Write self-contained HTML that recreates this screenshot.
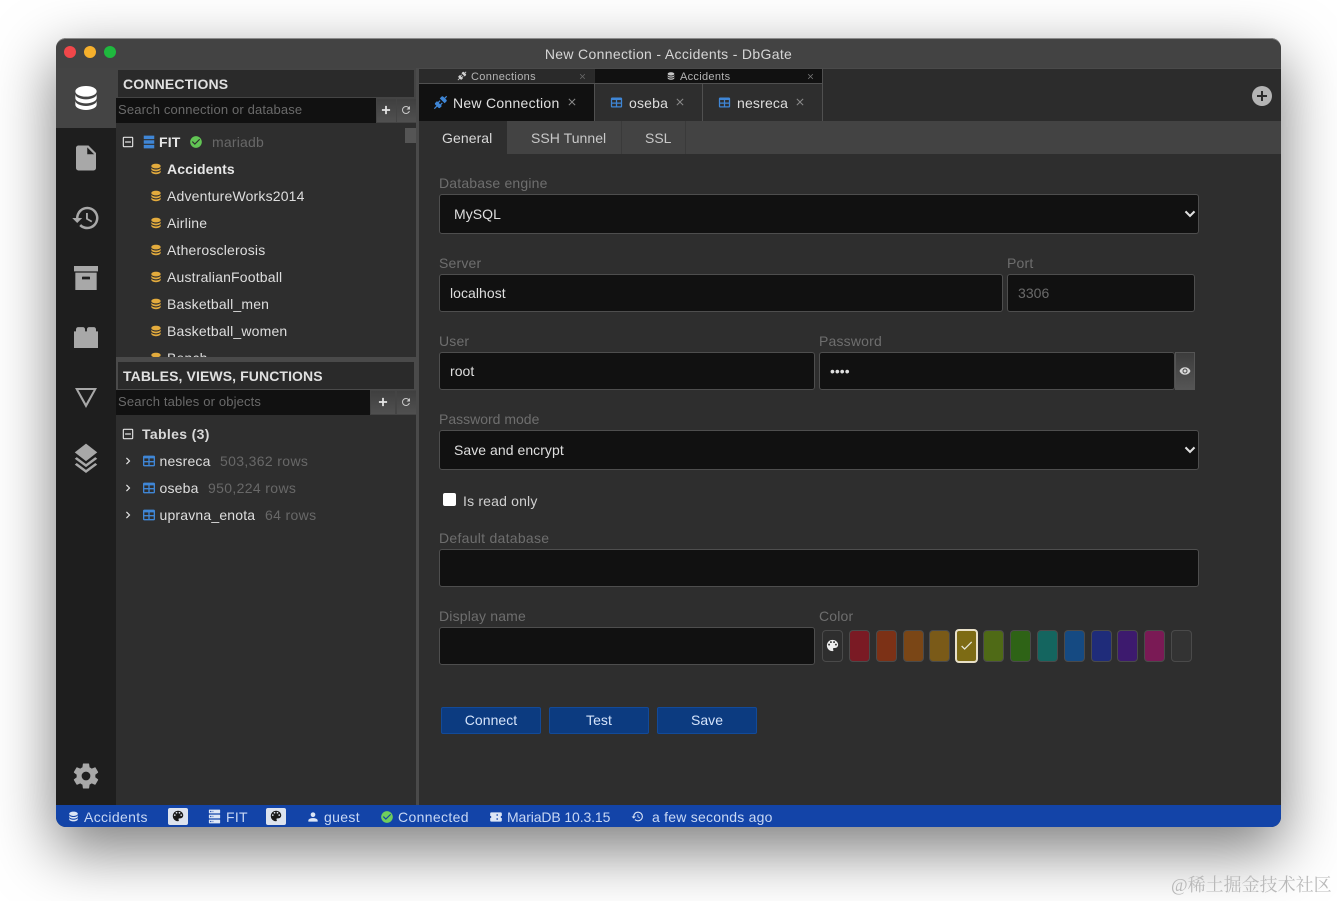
<!DOCTYPE html>
<html><head><meta charset="utf-8"><title>New Connection - Accidents - DbGate</title>
<style>
html,body{margin:0;padding:0;width:1337px;height:901px;overflow:hidden;background:#fff}
body{font-family:"Liberation Sans","Noto Sans CJK SC",sans-serif;font-size:14px;color:#dedede;position:relative}
.a,.t,svg,.b{position:absolute}
.t{line-height:20px;height:20px;white-space:nowrap;letter-spacing:.18px}
.l{color:#6e6e6e}
.d{color:#686868;letter-spacing:.35px}
.bd{font-weight:bold}
.f{letter-spacing:.05px}
.b{box-sizing:border-box;background:#111;border:1px solid #4e4e4e;border-radius:3px}
svg{fill:currentColor}
.y{color:#e3ab3d}.bl{color:#3f86d6}.g{color:#a8a8a8}.w{color:#e2e2e2}
.s{box-sizing:border-box;position:absolute;top:630px;width:21px;height:32px;border-radius:4px;border:1px solid #4a4a4a}
.st{color:#c9d8f4;font-size:14px;letter-spacing:.3px}
.se{color:#6a6a6a;font-size:13px;letter-spacing:.15px}
#win{position:absolute;left:56px;top:38px;width:1225px;height:789px;border-radius:10px;box-shadow:0 22px 60px 2px rgba(0,0,0,.5);background:#2e2e2e}
.btn{box-sizing:border-box;position:absolute;top:707px;width:100px;height:27px;background:#0c3b80;border:1px solid #124a99;border-radius:2px;color:#d4e3fa;text-align:center;line-height:25px;font-size:14px;letter-spacing:.05px}
.tb{position:absolute;background:linear-gradient(#3f3f3f,#505050)}
</style></head><body>
<svg width="0" height="0" style="left:0;top:0">
<defs>
<symbol id="db" viewBox="0 0 24 24"><path d="M12,3C7.58,3 4,4.79 4,7C4,9.21 7.58,11 12,11C16.42,11 20,9.21 20,7C20,4.79 16.42,3 12,3M4,9V12C4,14.21 7.58,16 12,16C16.42,16 20,14.21 20,12V9C20,11.21 16.42,13 12,13C7.58,13 4,11.21 4,9M4,14V17C4,19.21 7.58,21 12,21C16.42,21 20,19.21 20,17V14C20,16.21 16.42,18 12,18C7.58,18 4,16.21 4,14Z"/></symbol>
<symbol id="tbl" viewBox="0 0 24 24"><path d="M5,4H19A2,2 0 0,1 21,6V18A2,2 0 0,1 19,20H5A2,2 0 0,1 3,18V6A2,2 0 0,1 5,4M5,8V12H11V8H5M13,8V12H19V8H13M5,14V18H11V14H5M13,14V18H19V14H13Z"/></symbol>
<symbol id="pal" viewBox="0 0 24 24"><path d="M17.5,12A1.5,1.5 0 0,1 16,10.5A1.5,1.5 0 0,1 17.5,9A1.5,1.5 0 0,1 19,10.5A1.5,1.5 0 0,1 17.5,12M14.5,8A1.5,1.5 0 0,1 13,6.5A1.5,1.5 0 0,1 14.5,5A1.5,1.5 0 0,1 16,6.5A1.5,1.5 0 0,1 14.5,8M9.5,8A1.5,1.5 0 0,1 8,6.5A1.5,1.5 0 0,1 9.5,5A1.5,1.5 0 0,1 11,6.5A1.5,1.5 0 0,1 9.5,8M6.5,12A1.5,1.5 0 0,1 5,10.5A1.5,1.5 0 0,1 6.5,9A1.5,1.5 0 0,1 8,10.5A1.5,1.5 0 0,1 6.5,12M12,3A9,9 0 0,0 3,12A9,9 0 0,0 12,21A1.5,1.5 0 0,0 13.5,19.5C13.5,19.11 13.35,18.76 13.11,18.5C12.88,18.23 12.73,17.88 12.73,17.5A1.5,1.5 0 0,1 14.23,16H16A5,5 0 0,0 21,11C21,6.58 16.97,3 12,3Z"/></symbol>
<symbol id="x" viewBox="0 0 24 24"><path d="M19,6.41L17.59,5L12,10.59L6.41,5L5,6.41L10.59,12L5,17.59L6.41,19L12,13.41L17.59,19L19,17.59L13.41,12L19,6.41Z"/></symbol>
<symbol id="plus" viewBox="0 0 24 24"><path d="M19,13.5H13.5V19H10.5V13.5H5V10.5H10.5V5H13.5V10.5H19V13.5Z"/></symbol>
<symbol id="ref" viewBox="0 0 24 24"><path d="M17.65,6.35C16.2,4.9 14.21,4 12,4A8,8 0 0,0 4,12A8,8 0 0,0 12,20C15.73,20 18.84,17.45 19.73,14H17.65C16.83,16.33 14.61,18 12,18A6,6 0 0,1 6,12A6,6 0 0,1 12,6C13.66,6 15.14,6.69 16.22,7.78L13,11H20V4L17.65,6.35Z"/></symbol>
<symbol id="minus" viewBox="0 0 24 24"><path d="M19,3H5A2,2 0 0,0 3,5V19A2,2 0 0,0 5,21H19A2,2 0 0,0 21,19V5A2,2 0 0,0 19,3M19,19H5V5H19V19M17,11H7V13H17V11Z"/></symbol>
<symbol id="chev" viewBox="0 0 24 24"><path d="M8.59,16.58L13.17,12L8.59,7.41L10,6L16,12L10,18L8.59,16.58Z"/></symbol>
<symbol id="conn" viewBox="0 0 24 24"><path d="M21.4 7.5C22.2 8.3 22.2 9.6 21.4 10.3L18.6 13.1L10.8 5.3L13.6 2.5C14.4 1.7 15.7 1.7 16.4 2.5L18.2 4.3L21.2 1.3L22.6 2.7L19.6 5.7L21.4 7.5M15.6 13.3L14.2 11.9L11.4 14.7L9.3 12.6L12.1 9.8L10.7 8.4L7.9 11.2L6.4 9.8L3.6 12.6C2.8 13.4 2.8 14.7 3.6 15.4L5.4 17.2L1.4 21.2L2.8 22.6L6.8 18.6L8.6 20.4C9.4 21.2 10.7 21.2 11.4 20.4L14.2 17.6L12.8 16.2L15.6 13.3Z"/></symbol>
<symbol id="ok" viewBox="0 0 24 24"><path d="M12 2C6.5 2 2 6.5 2 12S6.5 22 12 22 22 17.5 22 12 17.5 2 12 2M10 17L5 12L6.41 10.59L10 14.17L17.59 6.58L19 8L10 17Z"/></symbol>
<symbol id="srv" viewBox="0 0 24 24"><path d="M4,1H20A1,1 0 0,1 21,2V6A1,1 0 0,1 20,7H4A1,1 0 0,1 3,6V2A1,1 0 0,1 4,1M4,9H20A1,1 0 0,1 21,10V14A1,1 0 0,1 20,15H4A1,1 0 0,1 3,14V10A1,1 0 0,1 4,9M4,17H20A1,1 0 0,1 21,18V22A1,1 0 0,1 20,23H4A1,1 0 0,1 3,22V18A1,1 0 0,1 4,17M9,5H10V3H9V5M9,13H10V11H9V13M9,21H10V19H9V21M5,3V5H7V3H5M5,11V13H7V11H5M5,19V21H7V19H5Z"/></symbol>
<symbol id="hist" viewBox="0 0 24 24"><path d="M13.5,8H12V13L16.28,15.54L17,14.33L13.5,12.25V8M13,3A9,9 0 0,0 4,12H1L4.96,16.03L9,12H6A7,7 0 0,1 13,5A7,7 0 0,1 20,12A7,7 0 0,1 13,19C11.07,19 9.32,18.21 8.06,16.94L6.64,18.36C8.27,20 10.5,21 13,21A9,9 0 0,0 22,12A9,9 0 0,0 13,3"/></symbol>
</defs></svg>

<div id="win"></div>
<div class="a" style="left:56px;top:38px;width:1225px;height:31px;background:#434343;border-radius:10px 10px 0 0;border-top:1px solid #8a8a8a;box-sizing:border-box"></div>
<div class="a" style="left:64px;top:46px;width:12px;height:12px;border-radius:50%;background:#f0474a"></div>
<div class="a" style="left:84px;top:46px;width:12px;height:12px;border-radius:50%;background:#f6b02c"></div>
<div class="a" style="left:104px;top:46px;width:12px;height:12px;border-radius:50%;background:#1fb93e"></div>
<div class="t" style="left:0;width:1337px;text-align:center;top:44px;color:#d6d6d6;letter-spacing:.33px">New Connection - Accidents - DbGate</div>

<!-- activity bar -->
<div class="a" style="left:56px;top:68px;width:60px;height:737px;background:#1e1e1e"></div>
<div class="a" style="left:56px;top:68px;width:60px;height:60px;background:#444"></div>
<svg style="left:70px;top:82px;color:#fff" width="32" height="32"><use href="#db"/></svg>
<svg class="g" style="left:71px;top:143px" width="30" height="30" viewBox="0 0 24 24"><path d="M13,9V3.5L18.5,9M6,2C4.89,2 4,2.89 4,4V20A2,2 0 0,0 6,22H18A2,2 0 0,0 20,20V8L14,2H6Z"/></svg>
<svg class="g" style="left:71px;top:203px" width="30" height="30"><use href="#hist"/></svg>
<svg class="g" style="left:70px;top:262px" width="32" height="32" viewBox="0 0 24 24"><path d="M3,3H21V7H3V3M4,8H20V21H4V8M9.5,11A0.5,0.5 0 0,0 9,11.5V13H15V11.5A0.5,0.5 0 0,0 14.5,11H9.5Z"/></svg>
<svg class="g" style="left:70px;top:322px" width="32" height="32" viewBox="0 0 24 24"><path d="M3,7H4.5V5.5C4.5,4.5 5.2,3.8 6.2,3.8H9.6C10.6,3.8 11.3,4.5 11.3,5.5V7H12.7V5.5C12.7,4.5 13.4,3.8 14.4,3.8H17.8C18.8,3.8 19.5,4.5 19.5,5.5V7H21V19.5H3V7Z"/></svg>
<svg class="g" style="left:74px;top:385px" width="24" height="24" viewBox="0 0 24 24"><path fill-rule="evenodd" d="M12,23L1,3H23ZM12,18.5L19.6,5H4.4Z"/></svg>
<svg class="g" style="left:71px;top:443px" width="30" height="30" viewBox="0 0 24 24"><path d="M12,0.5L3,7.5L12,14.5L21,7.5Z M4.6,11.3L3,12.6L12,19.3L21,12.6L19.4,11.3L12,16.8Z M4.6,16L3,17.3L12,24L21,17.3L19.4,16L12,21.5Z"/></svg>
<svg class="g" style="left:71px;top:761px" width="30" height="30" viewBox="0 0 24 24"><path d="M12,15.5A3.5,3.5 0 0,1 8.5,12A3.5,3.5 0 0,1 12,8.5A3.5,3.5 0 0,1 15.5,12A3.5,3.5 0 0,1 12,15.5M19.43,12.97C19.47,12.65 19.5,12.33 19.5,12C19.5,11.67 19.47,11.34 19.43,11L21.54,9.37C21.73,9.22 21.78,8.95 21.66,8.73L19.66,5.27C19.54,5.05 19.27,4.96 19.05,5.05L16.56,6.05C16.04,5.66 15.5,5.32 14.87,5.07L14.5,2.42C14.46,2.18 14.25,2 14,2H10C9.75,2 9.54,2.18 9.5,2.42L9.13,5.07C8.5,5.32 7.96,5.66 7.44,6.05L4.95,5.05C4.73,4.96 4.46,5.05 4.34,5.27L2.34,8.73C2.21,8.95 2.27,9.22 2.46,9.37L4.57,11C4.53,11.34 4.5,11.67 4.5,12C4.5,12.33 4.53,12.65 4.57,12.97L2.46,14.63C2.27,14.78 2.21,15.05 2.34,15.27L4.34,18.73C4.46,18.95 4.73,19.03 4.95,18.95L7.44,17.94C7.96,18.34 8.5,18.68 9.13,18.93L9.5,21.58C9.54,21.82 9.75,22 10,22H14C14.25,22 14.46,21.82 14.5,21.58L14.87,18.93C15.5,18.67 16.04,18.34 16.56,17.94L19.05,18.95C19.27,19.03 19.54,18.95 19.66,18.73L21.66,15.27C21.78,15.05 21.73,14.78 21.54,14.63L19.43,12.97Z"/></svg>

<!-- left pane -->
<div class="a" style="left:116px;top:68px;width:300px;height:737px;background:#2e2e2e"></div>
<div class="a" style="left:116px;top:68px;width:300px;height:30px;background:#444"></div>
<div class="a" style="left:118px;top:70px;width:296px;height:27px;background:#2a2a2a"></div>
<div class="t bd" style="left:123px;top:74px;color:#e0e0e0;letter-spacing:.17px">CONNECTIONS</div>
<div class="a" style="left:116px;top:98px;width:300px;height:25px;background:#444"></div>
<div class="a" style="left:116px;top:98px;width:260px;height:25px;background:#111"></div>
<div class="t se" style="left:118px;top:100px">Search connection or database</div>
<div class="tb" style="left:377px;top:99px;width:19px;height:23px"></div>
<div class="tb" style="left:397px;top:99px;width:19px;height:23px"></div>
<svg style="left:379px;top:103px;color:#e6e6e6" width="14" height="14"><use href="#plus"/></svg>
<svg style="left:400px;top:104px;color:#c8c8c8" width="12" height="12"><use href="#ref"/></svg>

<div class="a" style="left:405px;top:128px;width:11px;height:15px;background:#555"></div>
<svg class="w" style="left:121px;top:135px" width="14" height="14"><use href="#minus"/></svg>
<svg class="bl" style="left:142px;top:135px" width="14" height="14" viewBox="0 0 24 24"><path d="M3,1H21V7H3ZM3,9H21V15H3ZM3,17H21V23H3Z"/></svg>
<div class="t bd" style="left:159px;top:132px;color:#e6e6e6">FIT</div>
<svg style="left:189px;top:135px;color:#62c554" width="14" height="14"><use href="#ok"/></svg>
<div class="t d" style="left:212px;top:132px;letter-spacing:.2px">mariadb</div>

<svg class="y" style="left:149px;top:162px" width="14" height="14"><use href="#db"/></svg><div class="t bd" style="left:167px;top:159px;color:#e6e6e6;letter-spacing:.1px">Accidents</div>
<svg class="y" style="left:149px;top:189px" width="14" height="14"><use href="#db"/></svg><div class="t" style="left:167px;top:186px">AdventureWorks2014</div>
<svg class="y" style="left:149px;top:216px" width="14" height="14"><use href="#db"/></svg><div class="t" style="left:167px;top:213px">Airline</div>
<svg class="y" style="left:149px;top:243px" width="14" height="14"><use href="#db"/></svg><div class="t" style="left:167px;top:240px">Atherosclerosis</div>
<svg class="y" style="left:149px;top:270px" width="14" height="14"><use href="#db"/></svg><div class="t" style="left:167px;top:267px">AustralianFootball</div>
<svg class="y" style="left:149px;top:297px" width="14" height="14"><use href="#db"/></svg><div class="t" style="left:167px;top:294px">Basketball_men</div>
<svg class="y" style="left:149px;top:324px" width="14" height="14"><use href="#db"/></svg><div class="t" style="left:167px;top:321px">Basketball_women</div>
<svg class="y" style="left:149px;top:351px" width="14" height="14"><use href="#db"/></svg><div class="t" style="left:167px;top:348px">Bench</div>

<div class="a" style="left:116px;top:357px;width:300px;height:33px;background:#4a4a4a"></div>
<div class="a" style="left:118px;top:362px;width:296px;height:27px;background:#2a2a2a"></div>
<div class="t bd" style="left:123px;top:366px;color:#e0e0e0;letter-spacing:.1px">TABLES, VIEWS, FUNCTIONS</div>
<div class="a" style="left:116px;top:390px;width:300px;height:25px;background:#444"></div>
<div class="a" style="left:116px;top:390px;width:254px;height:25px;background:#111"></div>
<div class="t se" style="left:118px;top:392px">Search tables or objects</div>
<div class="tb" style="left:371px;top:391px;width:24px;height:23px"></div>
<div class="tb" style="left:397px;top:391px;width:19px;height:23px"></div>
<svg style="left:376px;top:395px;color:#e6e6e6" width="14" height="14"><use href="#plus"/></svg>
<svg style="left:400px;top:396px;color:#c8c8c8" width="12" height="12"><use href="#ref"/></svg>

<svg class="w" style="left:121px;top:427px" width="14" height="14"><use href="#minus"/></svg>
<div class="t" style="left:142px;top:424px;font-weight:bold;color:#d8d8d8;letter-spacing:.35px">Tables (3)</div>
<svg class="w" style="left:121px;top:454px" width="14" height="14"><use href="#chev"/></svg>
<svg class="bl" style="left:141px;top:453px" width="16" height="16"><use href="#tbl"/></svg>
<div class="t" style="left:159.5px;top:451px">nesreca</div><div class="t d" style="left:220px;top:451px">503,362 rows</div>
<svg class="w" style="left:121px;top:481px" width="14" height="14"><use href="#chev"/></svg>
<svg class="bl" style="left:141px;top:480px" width="16" height="16"><use href="#tbl"/></svg>
<div class="t" style="left:159.5px;top:478px">oseba</div><div class="t d" style="left:208px;top:478px">950,224 rows</div>
<svg class="w" style="left:121px;top:508px" width="14" height="14"><use href="#chev"/></svg>
<svg class="bl" style="left:141px;top:507px" width="16" height="16"><use href="#tbl"/></svg>
<div class="t" style="left:159.5px;top:505px">upravna_enota</div><div class="t d" style="left:265px;top:505px">64 rows</div>

<div class="a" style="left:416px;top:68px;width:3px;height:737px;background:#4a4a4a"></div>

<!-- right pane: tabs -->
<div class="a" style="left:419px;top:68px;width:862px;height:53px;background:#2c2c2c;border-top:1px solid #4a4a4a;box-sizing:border-box"></div>
<div class="a" style="left:419px;top:69px;width:175px;height:14px;background:#2a2a2a"></div>
<div class="a" style="left:595px;top:69px;width:227px;height:14px;background:#111"></div>
<div class="a" style="left:419px;top:83px;width:404px;height:1px;background:#505050"></div>
<svg style="left:457px;top:71px;color:#d0d0d0" width="10" height="10"><use href="#conn"/></svg>
<div class="t" style="left:471px;top:67px;font-size:11px;color:#b4b4b4;letter-spacing:.35px">Connections</div>
<svg style="left:578px;top:72px;color:#6a6a6a" width="9" height="9"><use href="#x"/></svg>
<svg style="left:666px;top:71px;color:#c8c8c8" width="10" height="10"><use href="#db"/></svg>
<div class="t" style="left:680px;top:67px;font-size:11px;color:#b4b4b4;letter-spacing:.3px">Accidents</div>
<svg style="left:806px;top:72px;color:#7a7a7a" width="9" height="9"><use href="#x"/></svg>

<div class="a" style="left:419px;top:84px;width:175px;height:37px;background:#111"></div>
<div class="a" style="left:595px;top:84px;width:107px;height:37px;background:#2e2e2e"></div>
<div class="a" style="left:703px;top:84px;width:119px;height:37px;background:#2e2e2e"></div>
<div class="a" style="left:594px;top:83px;width:1px;height:38px;background:#505050"></div>
<div class="a" style="left:702px;top:84px;width:1px;height:37px;background:#505050"></div>
<div class="a" style="left:822px;top:69px;width:1px;height:52px;background:#505050"></div>
<svg style="left:433px;top:95px;color:#3f86d6" width="15" height="15"><use href="#conn"/></svg>
<div class="t" style="left:453px;top:93px;color:#e0e0e0;letter-spacing:.27px">New Connection</div>
<svg style="left:566px;top:96px;color:#8a8a8a" width="12" height="12"><use href="#x"/></svg>
<svg class="bl" style="left:609px;top:95px" width="15" height="15"><use href="#tbl"/></svg>
<div class="t" style="left:629px;top:93px">oseba</div>
<svg style="left:674px;top:96px;color:#8a8a8a" width="12" height="12"><use href="#x"/></svg>
<svg class="bl" style="left:717px;top:95px" width="15" height="15"><use href="#tbl"/></svg>
<div class="t" style="left:737px;top:93px">nesreca</div>
<svg style="left:794px;top:96px;color:#8a8a8a" width="12" height="12"><use href="#x"/></svg>
<svg style="left:1250px;top:84px;color:#b4b4b4" width="24" height="24" viewBox="0 0 24 24"><path d="M17,13H13V17H11V13H7V11H11V7H13V11H17M12,2A10,10 0 0,0 2,12A10,10 0 0,0 12,22A10,10 0 0,0 22,12A10,10 0 0,0 12,2Z"/></svg>

<!-- sub tabs -->
<div class="a" style="left:419px;top:121px;width:862px;height:33px;background:#434343"></div>
<div class="a" style="left:419px;top:121px;width:88px;height:33px;background:#2e2e2e"></div>
<div class="a" style="left:621px;top:121px;width:1px;height:33px;background:#3a3a3a"></div>
<div class="a" style="left:685px;top:121px;width:1px;height:33px;background:#3a3a3a"></div>
<div class="t" style="left:442px;top:128px;color:#d8d8d8;letter-spacing:.08px">General</div>
<div class="t" style="left:531px;top:128px;color:#c8c8c8;letter-spacing:.05px">SSH Tunnel</div>
<div class="t" style="left:645px;top:128px;color:#c8c8c8;letter-spacing:0">SSL</div>

<!-- form -->
<div class="t l" style="left:439px;top:173px">Database engine</div>
<div class="b" style="left:439px;top:194px;width:760px;height:40px"></div>
<div class="t f" style="left:454px;top:204px">MySQL</div>
<svg style="left:1183px;top:206px;color:#e0e0e0" width="14" height="14" viewBox="0 0 24 24"><path d="M5.5,8L12,14.5L18.5,8L21,10.5L12,19.5L3,10.5Z"/></svg>

<div class="t l" style="left:439px;top:253px">Server</div>
<div class="b" style="left:439px;top:274px;width:564px;height:38px"></div>
<div class="t f" style="left:450px;top:283px">localhost</div>
<div class="t l" style="left:1007px;top:253px">Port</div>
<div class="b" style="left:1007px;top:274px;width:188px;height:38px"></div>
<div class="t f" style="left:1018px;top:283px;color:#6a6a6a">3306</div>

<div class="t l" style="left:439px;top:331px">User</div>
<div class="b" style="left:439px;top:352px;width:376px;height:38px"></div>
<div class="t f" style="left:450px;top:361px">root</div>
<div class="t l" style="left:819px;top:331px">Password</div>
<div class="b" style="left:819px;top:352px;width:356px;height:38px"></div>
<div class="t" style="left:830px;top:361px;letter-spacing:0;font-size:14px">••••</div>
<div class="a" style="box-sizing:border-box;left:1175px;top:352px;width:20px;height:38px;background:linear-gradient(#3c3c3c,#555);border:1px solid #555"></div>
<svg style="left:1179px;top:365px;color:#d8d8d8" width="12" height="12" viewBox="0 0 24 24"><path d="M12,9A3,3 0 0,0 9,12A3,3 0 0,0 12,15A3,3 0 0,0 15,12A3,3 0 0,0 12,9M12,17A5,5 0 0,1 7,12A5,5 0 0,1 12,7A5,5 0 0,1 17,12A5,5 0 0,1 12,17M12,4.5C7,4.5 2.73,7.61 1,12C2.73,16.39 7,19.5 12,19.5C17,19.5 21.27,16.39 23,12C21.27,7.61 17,4.5 12,4.5Z"/></svg>

<div class="t l" style="left:439px;top:409px;letter-spacing:0">Password mode</div>
<div class="b" style="left:439px;top:430px;width:760px;height:40px"></div>
<div class="t f" style="left:454px;top:440px">Save and encrypt</div>
<svg style="left:1183px;top:442px;color:#e0e0e0" width="14" height="14" viewBox="0 0 24 24"><path d="M5.5,8L12,14.5L18.5,8L21,10.5L12,19.5L3,10.5Z"/></svg>

<div class="a" style="left:443px;top:493px;width:13px;height:13px;background:#fff;border-radius:2px"></div>
<div class="t" style="left:463px;top:491px;color:#d0d0d0">Is read only</div>

<div class="t l" style="left:439px;top:528px;letter-spacing:.28px">Default database</div>
<div class="b" style="left:439px;top:549px;width:760px;height:38px"></div>

<div class="t l" style="left:439px;top:606px">Display name</div>
<div class="b" style="left:439px;top:627px;width:376px;height:38px"></div>
<div class="t l" style="left:819px;top:606px">Color</div>

<div class="s" style="left:822px;background:#2e2e2e"></div>
<svg style="left:825px;top:638px;color:#eee" width="15" height="15"><use href="#pal"/></svg>
<div class="s" style="left:849px;background:#7a1a24"></div>
<div class="s" style="left:876px;background:#7c3116"></div>
<div class="s" style="left:903px;background:#7a4616"></div>
<div class="s" style="left:929px;background:#7a5a18"></div>
<div class="s" style="left:955px;top:629px;width:23px;height:34px;background:#7d6b14;border:2px solid #e8e0c8"></div>
<svg style="left:959px;top:638px;color:#e8e8d8" width="15" height="15" viewBox="0 0 24 24"><path d="M21,7L9,19L3.5,13.5L4.91,12.09L9,16.17L19.59,5.59L21,7Z"/></svg>
<div class="s" style="left:983px;background:#4f6a16"></div>
<div class="s" style="left:1010px;background:#2e6316"></div>
<div class="s" style="left:1037px;background:#14655f"></div>
<div class="s" style="left:1064px;background:#154a82"></div>
<div class="s" style="left:1091px;background:#1f2c7a"></div>
<div class="s" style="left:1117px;background:#3d1a6e"></div>
<div class="s" style="left:1144px;background:#7a1a55"></div>
<div class="s" style="left:1171px;background:#333"></div>

<div class="btn" style="left:441px">Connect</div>
<div class="btn" style="left:549px">Test</div>
<div class="btn" style="left:657px">Save</div>

<!-- status bar -->
<div class="a" style="left:56px;top:805px;width:1225px;height:22px;background:#1344a8;border-radius:0 0 10px 10px"></div>
<svg style="left:67px;top:810px;color:#dde6f6" width="13" height="13"><use href="#db"/></svg>
<div class="t st" style="left:84px;top:807px;letter-spacing:.35px">Accidents</div>
<div class="a" style="left:168px;top:808px;width:20px;height:17px;background:#dde3ee;border-radius:2px"></div>
<svg style="left:171px;top:809px;color:#1a1a1a" width="14" height="14"><use href="#pal"/></svg>
<svg style="left:207px;top:809px;color:#dde6f6" width="15" height="15"><use href="#srv"/></svg>
<div class="t st" style="left:226px;top:807px">FIT</div>
<div class="a" style="left:266px;top:808px;width:20px;height:17px;background:#dde3ee;border-radius:2px"></div>
<svg style="left:269px;top:809px;color:#1a1a1a" width="14" height="14"><use href="#pal"/></svg>
<svg style="left:306px;top:810px;color:#dde6f6" width="14" height="14" viewBox="0 0 24 24"><path d="M12,4A4,4 0 0,1 16,8A4,4 0 0,1 12,12A4,4 0 0,1 8,8A4,4 0 0,1 12,4M12,14C16.42,14 20,15.79 20,18V20H4V18C4,15.79 7.58,14 12,14Z"/></svg>
<div class="t st" style="left:324px;top:807px;letter-spacing:.35px">guest</div>
<svg style="left:380px;top:810px;color:#6fce5c" width="14" height="14"><use href="#ok"/></svg>
<div class="t st" style="left:398px;top:807px;letter-spacing:.35px">Connected</div>
<svg style="left:489px;top:810px;color:#dde6f6" width="14" height="14" viewBox="0 0 24 24"><path fill-rule="evenodd" d="M4,4H20A2,2 0 0,1 22,6V10A2,2 0 0,0 22,14V18A2,2 0 0,1 20,20H4A2,2 0 0,1 2,18V14A2,2 0 0,0 2,10V6A2,2 0 0,1 4,4M13,7V10H15V7M13,14V17H15V14Z"/></svg>
<div class="t st" style="left:507px;top:807px;letter-spacing:-.12px">MariaDB 10.3.15</div>
<svg style="left:631px;top:810px;color:#dde6f6" width="13" height="13"><use href="#hist"/></svg>
<div class="t st" style="left:652px;top:807px;letter-spacing:.23px">a few seconds ago</div>

<div class="t" style="left:1171px;top:875px;color:#b9b9b9;font-size:18px;letter-spacing:0;font-family:'Liberation Serif','Noto Serif CJK SC',serif">@稀土掘金技术社区</div>
</body></html>
